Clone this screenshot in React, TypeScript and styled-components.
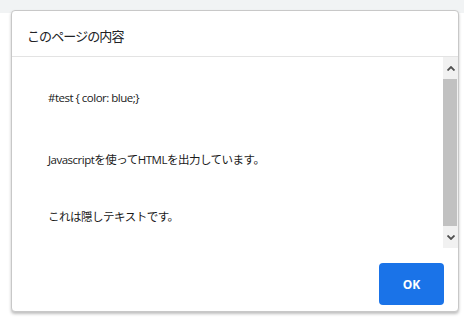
import React from "react";
import styled, { createGlobalStyle } from "styled-components";

const GlobalStyle = createGlobalStyle`
  html, body { margin: 0; padding: 0; background: #ffffff; }
  body { font-family: "Open Sans", "Noto Sans CJK JP", sans-serif; }
`;

const Page = styled.div`
  position: relative;
  width: 464px;
  height: 320px;
  overflow: hidden;
  background: #ffffff;
`;

const TopBand = styled.div`
  height: 13px;
  background: #f1f3f4;
`;

const Dialog = styled.div`
  position: absolute;
  left: 11px;
  top: 10px;
  width: 446px;
  height: 300px;
  background: #ffffff;
  border: 1px solid #c8c8c8;
  border-radius: 4px;
  box-shadow: 0 2px 3px rgba(0, 0, 0, 0.25);
  display: flex;
  flex-direction: column;
  overflow: hidden;
`;

const Header = styled.div`
  flex: none;
  display: flex;
  align-items: center;
  padding-left: 15px;
  border-bottom: 1px solid #e3e3e3;
  padding-top: 4px;
  box-sizing: border-box;
  height: 46px;
`;

const Title = styled.h1`
  margin: 0;
  font-family: "Noto Sans CJK JP", sans-serif;
  font-weight: 400;
  font-size: 13px;
  letter-spacing: -0.9px;
  color: #202124;
`;

const Body = styled.div`
  height: 191px;
  flex: none;
  display: flex;
`;

const Content = styled.div`
  flex: 1;
  padding: 33px 0 0 36px;
  display: flex;
  flex-direction: column;
  font-family: "Open Sans", "Noto Sans CJK JP", sans-serif;
  font-size: 11.5px;
  color: #1a1a1a;
`;

const Line = styled.p<{ $gap: number }>`
  margin: ${(p) => p.$gap}px 0 0 0;
  line-height: 16px;
  height: 16px;
  white-space: nowrap;
  letter-spacing: -0.5px;
`;

const Scrollbar = styled.div`
  width: 15px;
  flex: none;
  background: #f1f1f1;
  display: flex;
  flex-direction: column;
`;

const Arrow = styled.div`
  height: 22px;
  flex: none;
  display: flex;
  align-items: center;
  justify-content: center;
`;

const Thumb = styled.div`
  flex: 1;
  background: #c1c1c1;
  margin: 0 1px 0 0;
`;

const Footer = styled.div`
  flex: 1;
  display: flex;
  justify-content: flex-end;
  align-items: flex-start;
  padding: 15px 14px 0 0;
`;

const OkButton = styled.button`
  width: 65px;
  height: 42px;
  border: none;
  border-radius: 4px;
  background: #1a73e8;
  color: #ffffff;
  font-family: "Open Sans", sans-serif;
  font-weight: 700;
  font-size: 12px;
  cursor: pointer;
`;

const Chevron = ({ up }: { up?: boolean }) => (
  <svg width="8" height="5" viewBox="0 0 8 5">
    <path
      d={up ? "M0.5 4.5 L4 1 L7.5 4.5" : "M0.5 0.5 L4 4 L7.5 0.5"}
      fill="none"
      stroke="#505050"
      strokeWidth="1.8"
    />
  </svg>
);

export default function App() {
  return (
    <>
      <GlobalStyle />
      <Page>
        <TopBand />
        <Dialog>
          <Header>
            <Title>このページの内容</Title>
          </Header>
          <Body>
            <Content>
              <Line $gap={0}>#test {"{"} color: blue;{"}"}</Line>
              <Line $gap={46}>Javascriptを使ってHTMLを出力しています。</Line>
              <Line $gap={41}>これは隠しテキストです。</Line>
            </Content>
            <Scrollbar>
              <Arrow>
                <Chevron up />
              </Arrow>
              <Thumb />
              <Arrow>
                <Chevron />
              </Arrow>
            </Scrollbar>
          </Body>
          <Footer>
            <OkButton>OK</OkButton>
          </Footer>
        </Dialog>
      </Page>
    </>
  );
}
